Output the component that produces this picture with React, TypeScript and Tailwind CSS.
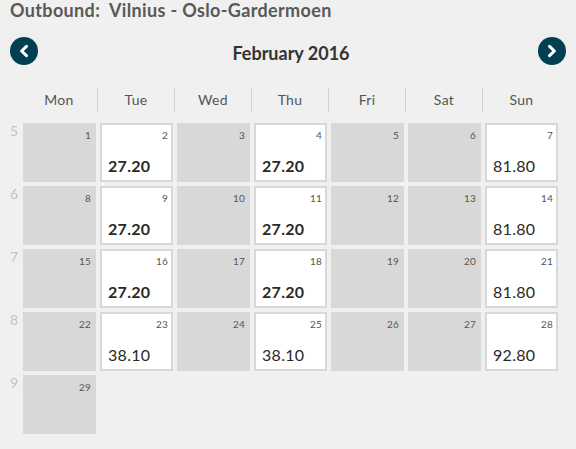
import React from "react";

type Day = { d: number; price?: string; bold?: boolean };

const weeks: { n: number; days: Day[] }[] = [
  {
    n: 5,
    days: [
      { d: 1 },
      { d: 2, price: "27.20", bold: true },
      { d: 3 },
      { d: 4, price: "27.20", bold: true },
      { d: 5 },
      { d: 6 },
      { d: 7, price: "81.80" },
    ],
  },
  {
    n: 6,
    days: [
      { d: 8 },
      { d: 9, price: "27.20", bold: true },
      { d: 10 },
      { d: 11, price: "27.20", bold: true },
      { d: 12 },
      { d: 13 },
      { d: 14, price: "81.80" },
    ],
  },
  {
    n: 7,
    days: [
      { d: 15 },
      { d: 16, price: "27.20", bold: true },
      { d: 17 },
      { d: 18, price: "27.20", bold: true },
      { d: 19 },
      { d: 20 },
      { d: 21, price: "81.80" },
    ],
  },
  {
    n: 8,
    days: [
      { d: 22 },
      { d: 23, price: "38.10" },
      { d: 24 },
      { d: 25, price: "38.10" },
      { d: 26 },
      { d: 27 },
      { d: 28, price: "92.80" },
    ],
  },
  { n: 9, days: [{ d: 29 }] },
];

const headers = ["Mon", "Tue", "Wed", "Thu", "Fri", "Sat", "Sun"];

function Chevron({ dir }: { dir: "left" | "right" }) {
  return (
    <svg width="28" height="28" viewBox="0 0 28 28">
      <circle cx="14" cy="14" r="14" fill="#023f52" />
      {dir === "left" ? (
        <path d="M16.5 9.3 L11.6 14 L16.5 18.7" fill="none" stroke="#fff" strokeWidth="3" strokeLinecap="round" strokeLinejoin="round" />
      ) : (
        <path d="M11.5 9.3 L16.4 14 L11.5 18.7" fill="none" stroke="#fff" strokeWidth="3" strokeLinecap="round" strokeLinejoin="round" />
      )}
    </svg>
  );
}

function Cell({ day }: { day: Day }) {
  const white = !!day.price;
  return (
    <div
      className={`h-[59px] border-2 border-[#d8d8d8] flex flex-col ${white ? "bg-white" : "bg-[#d8d8d8]"}`}
    >
      <div className="text-right pr-[3px] pt-[4px] text-[10px] leading-[12px] tracking-[0.2px] text-[#555]">{day.d}</div>
      {day.price && (
        <div
          className={`mt-auto pl-[6px] pb-[4px] text-[16px] leading-[20px] tracking-[0.3px] text-[#2b2926] ${day.bold ? "font-bold" : "font-normal"}`}
        >
          {day.price}
        </div>
      )}
    </div>
  );
}

export default function App() {
  return (
    <div className="w-[576px] h-[449px] bg-[#f0f0f0] overflow-hidden font-['Lato',sans-serif]">
      <div className="pl-[10px] h-[20px] text-[18px] leading-[20px] font-bold tracking-[0.35px] text-[#595959] whitespace-pre">
        {"Outbound:  Vilnius - Oslo-Gardermoen"}
      </div>
      <div className="mt-[17px] px-[10px] h-[28px] flex items-center justify-between">
        <Chevron dir="left" />
        <div className="pt-[3px] pl-[6px] text-[18px] leading-[22px] font-bold text-[#333]">February 2016</div>
        <Chevron dir="right" />
      </div>
      <div className="mt-[23px] pl-[21px] grid grid-cols-[repeat(7,77px)] h-[24px]">
        {headers.map((h, i) => (
          <div
            key={h}
            className={`flex items-center justify-center text-[14px] leading-[24px] tracking-[0.3px] text-[#555] ${i < 6 ? "border-r border-[#d2d2d2]" : ""}`}
          >
            {h}
          </div>
        ))}
      </div>
      <div className="mt-[11px] flex flex-col gap-[4px]">
        {weeks.map((w) => (
          <div key={w.n} className="flex">
            <div className="w-[23px] pl-[10px] text-[14px] leading-[16px] text-[#c4c4c4]">{w.n}</div>
            <div className="grid grid-cols-[repeat(7,73px)] gap-x-[4px]">
              {w.days.map((d) => (
                <Cell key={d.d} day={d} />
              ))}
            </div>
          </div>
        ))}
      </div>
    </div>
  );
}
